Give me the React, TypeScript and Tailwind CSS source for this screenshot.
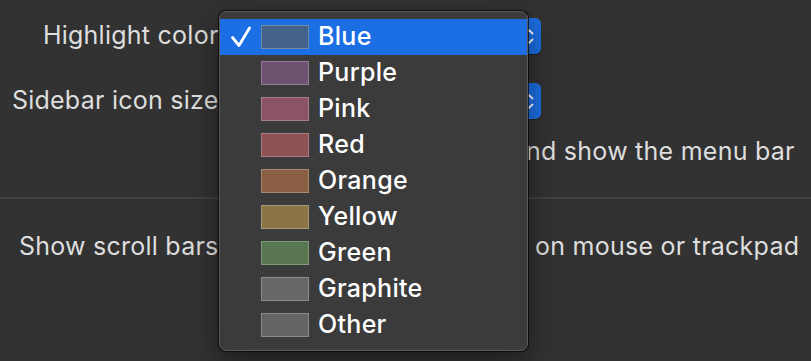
const colors = [
  { name: 'Blue', swatch: '#44638a' },
  { name: 'Purple', swatch: '#6d5370' },
  { name: 'Pink', swatch: '#8a5367' },
  { name: 'Red', swatch: '#8c5254' },
  { name: 'Orange', swatch: '#8b5f44' },
  { name: 'Yellow', swatch: '#8b7547' },
  { name: 'Green', swatch: '#587650' },
  { name: 'Graphite', swatch: '#676767' },
  { name: 'Other', swatch: '#646464' },
]

const selected = 'Blue'

function Check() {
  return (
    <svg width="20" height="22" viewBox="0 0 20 22" fill="none">
      <polyline
        points="1.5,11.5 8,19.5 18.5,2"
        stroke="white"
        strokeWidth="2.8"
        strokeLinecap="round"
        strokeLinejoin="round"
      />
    </svg>
  )
}

// popup button sits under the open menu; only its blue arrow cap shows
function PopupButton() {
  return (
    <div className="flex h-[36px] w-[307px] items-center justify-end rounded-[6px] bg-[#5c5c5c] shadow-[0_1px_1px_rgba(0,0,0,0.4)]">
      <div className="flex h-full w-[24px] flex-col items-center justify-center gap-[3px] rounded-r-[6px] bg-[#1b6ee3]">
        <svg width="10" height="7" viewBox="0 0 10 7" fill="none">
          <polyline points="1.5,5.5 5,2 8.5,5.5" stroke="white" strokeWidth="1.8" strokeLinecap="round" />
        </svg>
        <svg width="10" height="7" viewBox="0 0 10 7" fill="none">
          <polyline points="1.5,1.5 5,5 8.5,1.5" stroke="white" strokeWidth="1.8" strokeLinecap="round" />
        </svg>
      </div>
    </div>
  )
}

function Row({ label, children }: { label?: string; children: React.ReactNode }) {
  return (
    <div className="flex h-[36px] items-center">
      <div className="w-[226px] shrink-0 whitespace-nowrap text-right">{label}</div>
      <div className="ml-[8px] flex items-center">{children}</div>
    </div>
  )
}

export default function App() {
  return (
    <div className="relative h-[361px] w-[811px] overflow-hidden bg-[#323232] font-['Inter','Liberation_Sans',sans-serif] text-[25px] tracking-[0.25px] text-[#dedede]">
      <div className="pt-[18px]">
        <Row label="Highlight color:">
          <PopupButton />
        </Row>

        <div className="mt-[29px]">
          <Row label="Sidebar icon size:">
            <PopupButton />
          </Row>
        </div>

        <div className="mt-[15px]">
          <Row>
            <div className="h-[20px] w-[20px] rounded-[4px] bg-[#5c5c5c]" />
            <span className="ml-[272px] whitespace-nowrap">nd show the menu bar</span>
          </Row>
        </div>

        <div className="mt-[27px] h-[2px] bg-[#414141]" />

        <div className="mt-[30px]">
          <Row label="Show scroll bars:">
            <div className="h-[20px] w-[20px] rounded-full bg-[#1b6ee3]" />
            <span className="ml-[281px] whitespace-nowrap">on mouse or trackpad</span>
          </Row>
        </div>
      </div>

      {/* highlight colour popup menu */}
      <div className="absolute left-[219px] top-[11px] w-[309px] rounded-[7px] border border-[#5c5c5c] bg-[#3b3b3b] py-[7px] shadow-[0_0_0_1px_rgba(0,0,0,0.7),0_10px_30px_rgba(0,0,0,0.45)]">
        {colors.map((c) => (
          <div
            key={c.name}
            className={`flex h-[36px] items-center ${c.name === selected ? 'bg-[#1b6ee3]' : ''}`}
          >
            <div className="flex w-[41px] justify-start pl-[11px]">
              {c.name === selected && <Check />}
            </div>
            <div
              className="h-[24px] w-[48px] border border-white/25"
              style={{ backgroundColor: c.swatch }}
            />
            <span className="ml-[9px] font-medium tracking-[0.3px] text-white">{c.name}</span>
          </div>
        ))}
      </div>
    </div>
  )
}
